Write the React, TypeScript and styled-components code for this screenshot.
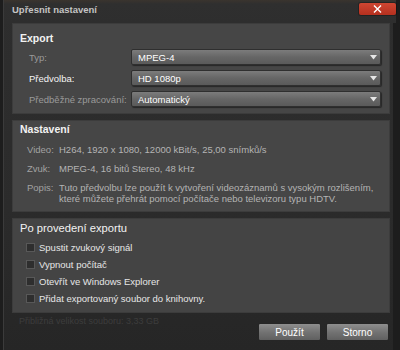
import styled, { createGlobalStyle } from "styled-components";

const GlobalStyle = createGlobalStyle`
  html, body {
    margin: 0;
    padding: 0;
    background: #1d1d1d;
    overflow: hidden;
  }
  body {
    font-family: "Liberation Sans", Arial, sans-serif;
  }
`;

const exportRows = [
  { label: "Typ:", value: "MPEG-4", active: false },
  { label: "Předvolba:", value: "HD 1080p", active: true },
  { label: "Předběžné zpracování:", value: "Automatický", active: false },
];

const settings = [
  { label: "Video:", lines: ["H264, 1920 x 1080, 12000 kBit/s, 25,00 snímků/s"] },
  { label: "Zvuk:", lines: ["MPEG-4, 16 bitů Stereo, 48 kHz"] },
  {
    label: "Popis:",
    lines: [
      "Tuto předvolbu lze použít k vytvoření videozáznamů s vysokým rozlišením,",
      "které můžete přehrát pomocí počítače nebo televizoru typu HDTV.",
    ],
  },
];

const afterExport = [
  "Spustit zvukový signál",
  "Vypnout počítač",
  "Otevřít ve Windows Explorer",
  "Přidat exportovaný soubor do knihovny.",
];

export default function App() {
  return (
    <>
      <GlobalStyle />
      <Stl.Page>
        <Stl.Dialog>
          <Stl.TitleBar>
            <Stl.Title>Upřesnit nastavení</Stl.Title>
            <Stl.Close>
              <svg width="9" height="8" viewBox="0 0 9 8">
                <path d="M1 0.5 L8 7.5 M8 0.5 L1 7.5" stroke="#fff" strokeWidth="1.4" />
              </svg>
            </Stl.Close>
          </Stl.TitleBar>

          <Stl.Body>
            <Stl.Panel $pt={8} $pb={7}>
              <Stl.Heading>Export</Stl.Heading>
              <Stl.Form>
                {exportRows.map((row) => (
                  <Stl.FormRow key={row.label}>
                    <Stl.FormLabel $active={row.active}>{row.label}</Stl.FormLabel>
                    <Stl.Select>
                      <span>{row.value}</span>
                      <svg width="7" height="5" viewBox="0 0 7 5">
                        <path d="M0 0 H7 L3.5 4.5 Z" fill="#e6e6e6" />
                      </svg>
                    </Stl.Select>
                  </Stl.FormRow>
                ))}
              </Stl.Form>
            </Stl.Panel>

            <Stl.Panel $pt={2} $pb={8}>
              <Stl.Heading>Nastavení</Stl.Heading>
              <Stl.InfoList>
                {settings.map((s) => (
                  <Stl.InfoRow key={s.label}>
                    <Stl.InfoLabel>{s.label}</Stl.InfoLabel>
                    <Stl.InfoValue>
                      {s.lines.map((l) => (
                        <div key={l}>{l}</div>
                      ))}
                    </Stl.InfoValue>
                  </Stl.InfoRow>
                ))}
              </Stl.InfoList>
            </Stl.Panel>

            <Stl.Panel $pt={3} $pb={6} $bg="#444444">
              <Stl.SubHeading>Po provedení exportu</Stl.SubHeading>
              <Stl.Checks>
                {afterExport.map((c) => (
                  <Stl.CheckRow key={c}>
                    <Stl.Box />
                    <span>{c}</span>
                  </Stl.CheckRow>
                ))}
              </Stl.Checks>
            </Stl.Panel>

            <Stl.Footer>
              <Stl.Note>Přibližná velikost souboru: 3,33 GB</Stl.Note>
              <Stl.Buttons>
                <Stl.Button>Použít</Stl.Button>
                <Stl.Button>Storno</Stl.Button>
              </Stl.Buttons>
            </Stl.Footer>
          </Stl.Body>
        </Stl.Dialog>
      </Stl.Page>
    </>
  );
}

const Stl = {
  Page: styled.div`
    width: 400px;
    height: 350px;
    padding-left: 3px;
    box-sizing: border-box;
    background: #1d1d1d;
  `,
  Dialog: styled.div`
    width: 390px;
    height: 350px;
    box-sizing: border-box;
    border-left: 1px solid #3b3b3b;
    background: linear-gradient(to bottom, #2e2e2e 0%, #2b2b2b 60%, #262626 100%);
    display: flex;
    flex-direction: column;
  `,
  TitleBar: styled.div`
    height: 23px;
    display: flex;
    justify-content: space-between;
    align-items: flex-start;
    padding: 0 0 0 8px;
    margin-right: -3px;
    background: linear-gradient(
      to bottom,
      #3a342e 0px,
      #2f2f2f 4px,
      #2e2e2e 100%
    );
  `,
  Title: styled.div`
    margin-top: 3px;
    line-height: 14px;
    font-size: 9.5px;
    font-weight: 700;
    color: #c4c4c4;
  `,
  Close: styled.div`
    margin-top: 3px;
    width: 37px;
    height: 12px;
    display: flex;
    align-items: center;
    justify-content: center;
    border-radius: 2px;
    background: linear-gradient(to bottom, #cf4632 0%, #b5301f 100%);
    box-shadow: 0 0 0 1px rgba(0, 0, 0, 0.25);
  `,
  Body: styled.div`
    flex: 1;
    display: flex;
    flex-direction: column;
    gap: 6px;
    padding: 0 3px 0 8px;
  `,
  Panel: styled.div<{ $pt: number; $pb: number; $bg?: string }>`
    box-sizing: border-box;
    padding: ${({ $pt }) => $pt}px 9px ${({ $pb }) => $pb}px 8px;
    background: ${({ $bg }) => $bg ?? "#464646"};
    box-shadow: inset 0 0 0 1px #3c3c3c;
    & + & {
      margin-top: 0;
    }
  `,
  Heading: styled.div`
    line-height: 14px;
    font-size: 10.5px;
    font-weight: 700;
    color: #f2f2f2;
  `,
  SubHeading: styled.div`
    line-height: 14px;
    font-size: 11.2px;
    color: #f2f2f2;
  `,
  Form: styled.div`
    margin-top: 4px;
    display: flex;
    flex-direction: column;
    gap: 5px;
  `,
  FormRow: styled.div`
    display: flex;
    align-items: center;
    padding-left: 9px;
  `,
  FormLabel: styled.div<{ $active: boolean }>`
    width: 102px;
    font-size: 9.5px;
    color: ${({ $active }) => ($active ? "#f4f4f4" : "#9a9a9a")};
  `,
  Select: styled.div`
    flex: 1;
    height: 16px;
    box-sizing: border-box;
    display: flex;
    align-items: center;
    justify-content: space-between;
    padding: 0 3px 0 6px;
    border-radius: 2px;
    border: 1px solid #2f2f2f;
    background: linear-gradient(to bottom, #7c7c7c 0%, #666666 50%, #5a5a5a 100%);
    box-shadow: 1px 1px 1px rgba(0, 0, 0, 0.45);
    font-size: 9.5px;
    color: #ffffff;
  `,
  InfoList: styled.div`
    margin-top: 8px;
    display: flex;
    flex-direction: column;
    gap: 8px;
  `,
  InfoRow: styled.div`
    display: flex;
    padding-left: 7px;
    line-height: 11px;
    font-size: 9.5px;
  `,
  InfoLabel: styled.div`
    width: 32px;
    color: #a2a2a2;
  `,
  InfoValue: styled.div`
    flex: 1;
    color: #b4b4b4;
    white-space: nowrap;
  `,
  Checks: styled.div`
    margin-top: 4px;
    display: flex;
    flex-direction: column;
  `,
  CheckRow: styled.div`
    height: 17px;
    display: flex;
    align-items: center;
    gap: 4px;
    padding-left: 6px;
    font-size: 9.5px;
    color: #e6e6e6;
  `,
  Box: styled.div`
    width: 9px;
    height: 9px;
    box-sizing: border-box;
    border: 1px solid #585858;
    background: #2e2e2e;
  `,
  Footer: styled.div`
    display: flex;
    justify-content: space-between;
    align-items: flex-start;
    margin-top: -5px;
  `,
  Note: styled.div`
    padding: 2px 0 0 7px;
    line-height: 11px;
    font-size: 9px;
    color: #3d3d3d;
  `,
  Buttons: styled.div`
    display: flex;
    gap: 5px;
    margin-top: 9px;
    margin-right: 1px;
  `,
  Button: styled.div`
    width: 63px;
    height: 18px;
    box-sizing: border-box;
    display: flex;
    align-items: center;
    justify-content: center;
    border-radius: 2px;
    border: 1px solid #262626;
    background: linear-gradient(to bottom, #8e8e8e 0%, #737373 50%, #606060 100%);
    font-size: 10px;
    color: #ffffff;
  `,
};
